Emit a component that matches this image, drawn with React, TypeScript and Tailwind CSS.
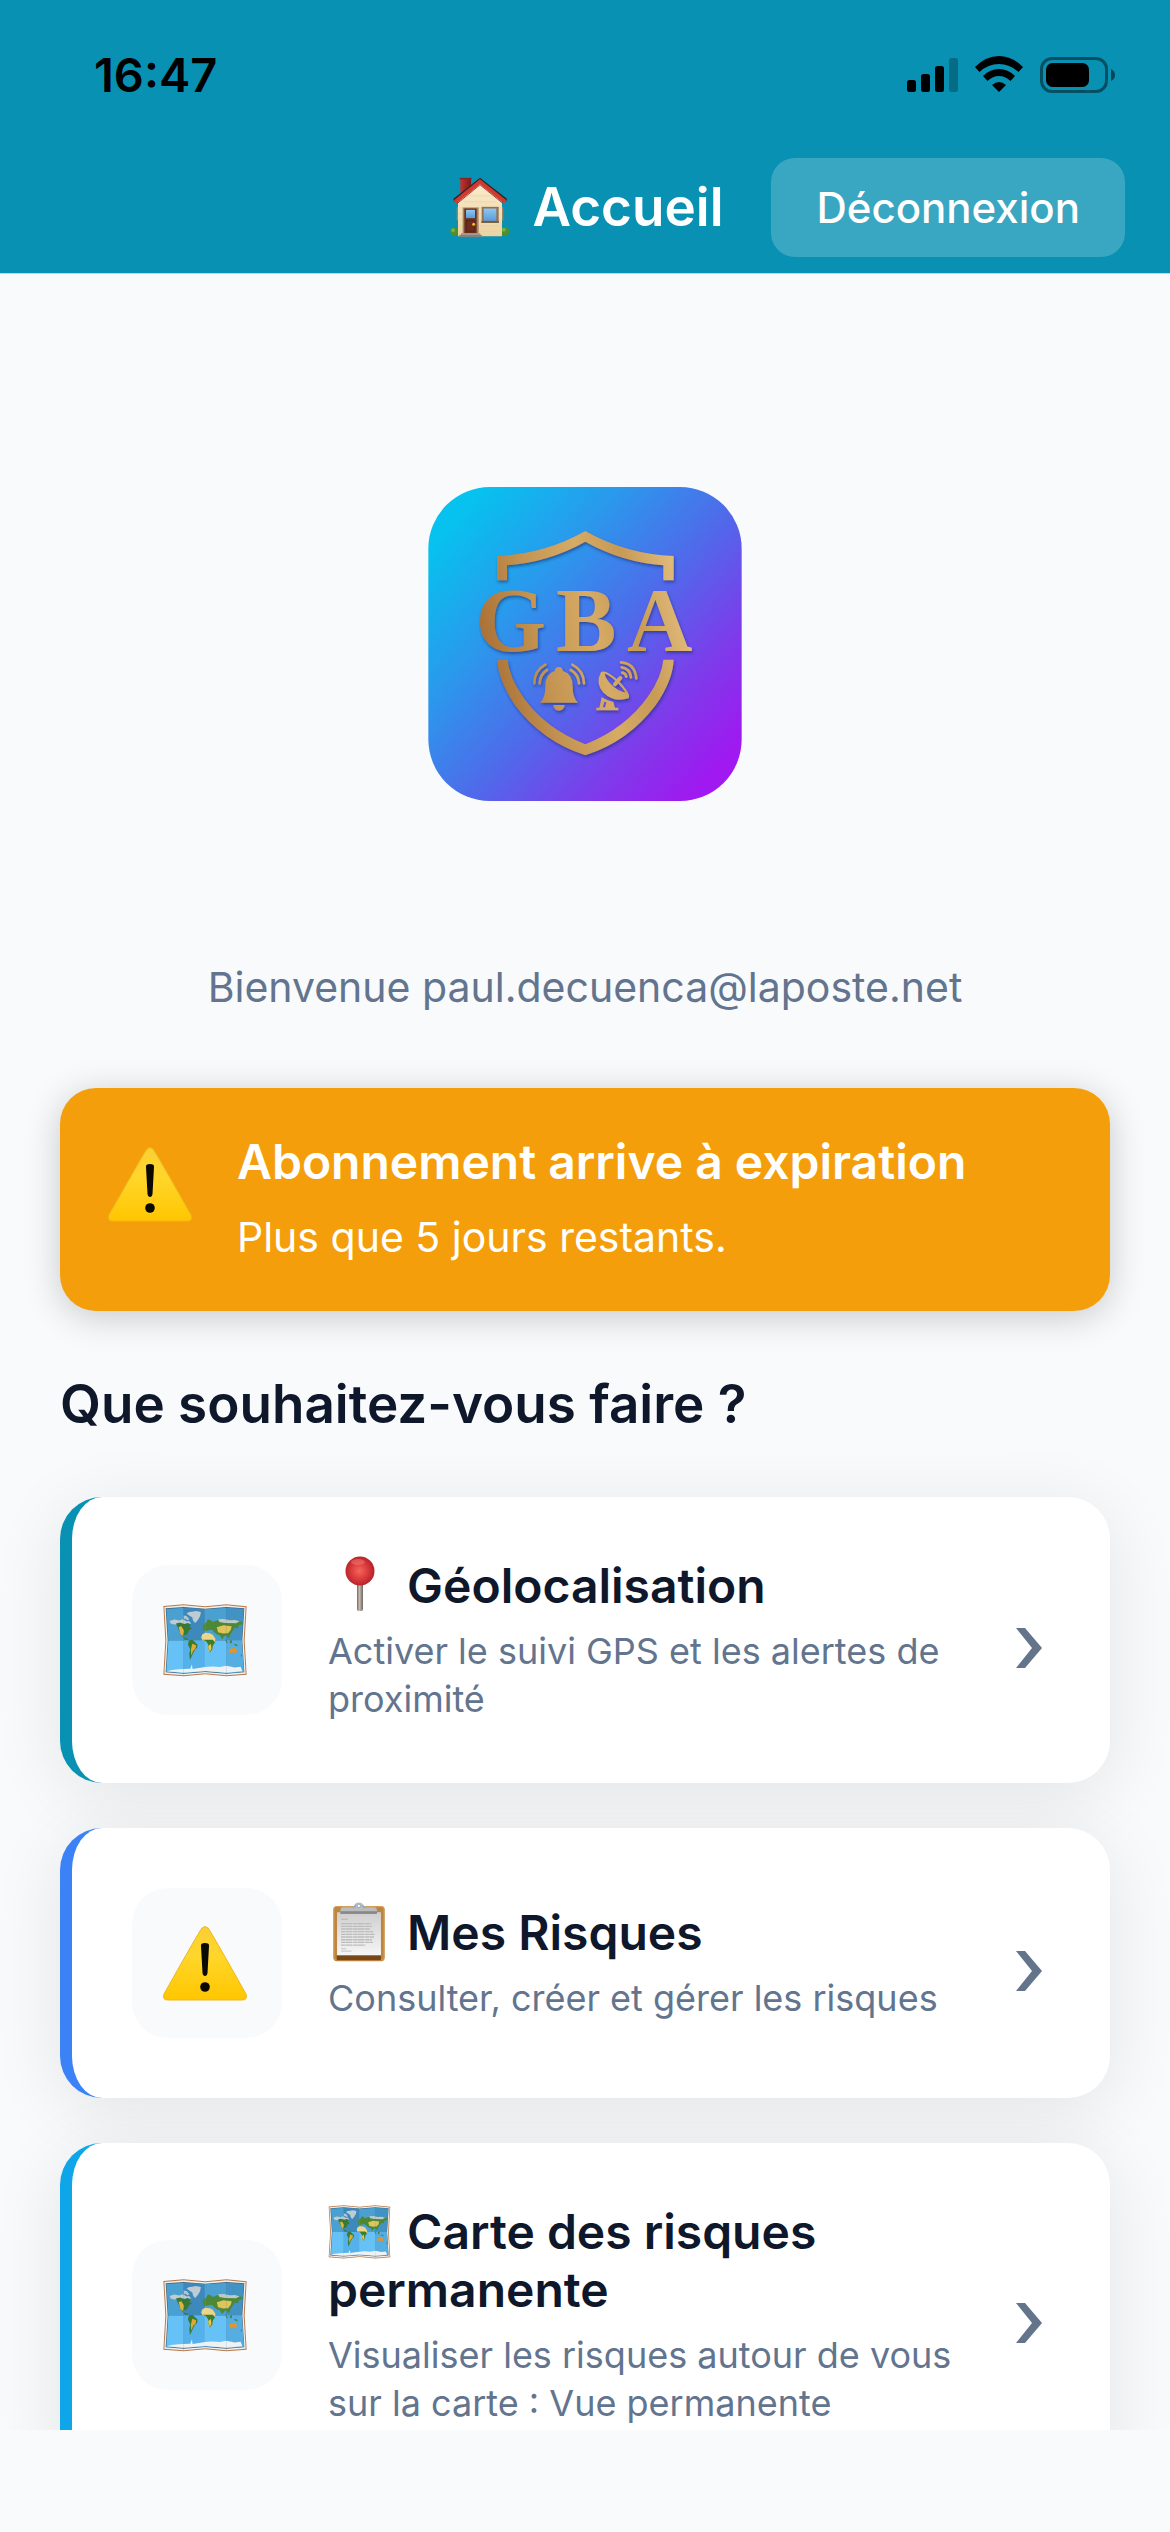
import React from "react";

type IconProps = { className?: string };

function HouseIcon({ className }: IconProps) {
  return (
    <svg viewBox="98 80 180 182" className={className} aria-hidden="true">
      <defs>
        <linearGradient id="house-wall" x1="0" y1="0" x2="0" y2="1">
          <stop offset="0" stopColor="#fbeccb" />
          <stop offset="1" stopColor="#ecd3a4" />
        </linearGradient>
        <linearGradient id="house-brick" x1="0" y1="0" x2="1" y2="0">
          <stop offset="0" stopColor="#c5342c" />
          <stop offset="1" stopColor="#7d1a1a" />
        </linearGradient>
        <linearGradient id="house-glass" x1="0" y1="0" x2="0" y2="1">
          <stop offset="0" stopColor="#8fc7ef" />
          <stop offset="1" stopColor="#5b9bd8" />
        </linearGradient>
      </defs>
      <rect x="129" y="83" width="32" height="50" fill="url(#house-brick)" />
      <rect x="127" y="82" width="36" height="5" fill="#8a2420" />
      <circle cx="111" cy="243" r="12" fill="#4f8f2c" />
      <circle cx="107" cy="239" r="6" fill="#74b043" />
      <circle cx="263" cy="243" r="13" fill="#4f8f2c" />
      <circle cx="259" cy="238" r="6" fill="#74b043" />
      <path d="M118 170h6v40h-6zM252 170h6v40h-6z" fill="#9a8467" />
      <path d="M188 94 254 154V257H122V154Z" fill="url(#house-wall)" />
      <path d="M124 172H252M124 190H252M124 208H252M124 226H252M124 242H252M140 154H236M158 136H218" stroke="#e2cca0" strokeWidth="1.5" />
      <path d="M108 145 188 82 269 145 267 153 188 92 110 153Z" fill="#33272a" />
      <path d="M110 149 188 86 267 149 260 159 188 101 117 159Z" fill="#d33a2f" />
      <path d="M121 158 188 103 256 158" fill="none" stroke="#8f1f1c" strokeWidth="2.5" />
      <rect x="136" y="171" width="48" height="80" fill="#a48664" />
      <rect x="141" y="174" width="37" height="75" fill="#6e2d1c" />
      <rect x="146" y="178" width="27" height="25" fill="url(#house-glass)" />
      <rect x="147" y="210" width="25" height="32" fill="none" stroke="#54200f" strokeWidth="2" />
      <circle cx="169" cy="221" r="4.5" fill="#f2bb35" />
      <rect x="193" y="169" width="51" height="47" fill="#8f7355" />
      <rect x="199" y="174" width="38" height="37" fill="url(#house-glass)" />
      <rect x="192" y="212" width="53" height="5" fill="#6f573e" />
      <rect x="131" y="248" width="58" height="6" fill="#a5a09a" />
      <rect x="126" y="253" width="67" height="7" fill="#85817c" />
    </svg>
  );
}

function MapIcon({ className }: IconProps) {
  return (
    <svg viewBox="99 130 253 220" className={className} aria-hidden="true">
      <path d="M100 136 161 131 226 137 290 131 351 137 345 240 351 343 290 348 226 342 161 348 100 343 106 240Z" fill="#b87a4b" />
      <path d="M103 139 161 134 226 140 290 134 348 140 342 240 348 340 290 345 226 339 161 345 103 340 109 240Z" fill="#f3efe9" />
      <path d="M107 143 161 139 226 144 290 139 344 143 338 240 344 336 290 340 226 335 161 340 107 336 113 240Z" fill="#3d6583" />
      <path d="M109 145 161 141 226 146 290 141 342 145 336 240H115Z" fill="#4ba0d2" />
      <path d="M115 240H336L342 334 290 338 226 333 161 338 109 334Z" fill="#66c2f6" />
      <path d="M161 141 226 146V240H161Z" fill="#397fb2" opacity="0.7" />
      <path d="M290 141 342 145 336 240H290Z" fill="#3c86b8" opacity="0.55" />
      <path d="M161 240H226V333L161 338Z" fill="#55b1e9" />
      <path d="M290 240H336L342 334 290 338Z" fill="#55ade2" />
      <path d="M119 181 133 177 148 180 159 176 171 183 178 181 184 190 174 188 164 193 148 190 132 192 122 189Z" fill="#c1ccd1" />
      <path d="M138 189 150 186 163 190 173 187 183 193 178 199 187 203 178 208 173 220 165 225 159 221 160 230 171 234 177 240 166 237 155 226 149 213 144 202Z" fill="#387936" />
      <path d="M146 199 154 197 162 209 161 219 157 227 151 218Z" fill="#dfb441" />
      <path d="M170 159 178 154 187 153 198 151 213 154 211 166 204 178 196 187 190 181 187 170 180 166Z" fill="#bfcbd2" />
      <path d="M161 165 170 166 178 175 174 180 165 174 162 178Z" fill="#b1c7d4" />
      <path d="M177 240 188 238 196 246 203 252 202 262 195 268 190 278 184 291 180 299 178 281 181 267 174 252Z" fill="#397b33" />
      <path d="M187 250 199 254 197 264 190 271 184 286 183 268Z" fill="#e5a832" />
      <path d="M219 193 231 184 234 176 243 179 249 184 265 178 286 181 303 178 320 180 340 184 339 191 327 194 324 204 315 201 309 211 303 220 300 230 293 232 289 223 283 229 277 236 271 225 262 222 253 215 247 208 236 209 225 212 219 205Z" fill="#4c8836" />
      <path d="M261 200 281 194 306 197 303 208 295 218 280 219 265 215Z" fill="#dfc45b" />
      <path d="M265 176 282 175 300 179 316 178 330 182 319 188 286 187 269 184Z" fill="#bdcac8" />
      <path d="M217 222 226 217 240 218 249 223 257 235 255 245 249 255 246 270 239 277 234 266 235 252 229 242 218 239 214 231Z" fill="#ead589" />
      <path d="M219 238 249 238 256 245 249 256 248 266 240 277 236 266 235 252 229 243Z" fill="#3b7e31" />
      <path d="M235 257 243 250 245 265 240 275Z" fill="#edc553" />
      <path d="M298 270 304 263 312 264 317 260 322 271 319 279 311 275 300 279Z" fill="#e99325" />
      <path d="M286 236 291 241 295 250 290 246ZM301 240 307 239 306 249 300 247ZM312 250 322 252 324 257 317 256ZM333 281 338 286 335 290Z" fill="#43853d" />
      <path d="M111 333 125 329 145 327 160 326 181 325 186 312 188 326 207 323 226 320 248 318 270 320 290 316 315 321 333 319 338 333 290 337 226 332 161 337Z" fill="#eef2f4" />
      <path d="M161 135V345M290 135V345" stroke="#315671" strokeWidth="1" opacity="0.4" />
      <path d="M226 139V341" stroke="#fff" strokeWidth="1" opacity="0.25" />
    </svg>
  );
}

function WarningIcon({ className }: IconProps) {
  return (
    <svg viewBox="0 0 84 75" className={className} aria-hidden="true">
      <defs>
        <linearGradient id="warning-fill" x1="0" y1="0" x2="0" y2="1">
          <stop offset="0" stopColor="#f9cf35" />
          <stop offset="0.4" stopColor="#ffd62b" />
          <stop offset="1" stopColor="#ffc600" />
        </linearGradient>
      </defs>
      <path d="M39 2Q42 -1 45 2Q47 4 83 68Q85 74 79 74H5Q-1 74 1 68Q37 4 39 2Z" fill="url(#warning-fill)" stroke="#efb71b" strokeWidth="1" />
      <path d="M38 20Q37.500 17 42 17Q46.500 17 46 20L44.500 47Q44 50 42 50Q40 50 39.500 47Z" fill="#0b0904" />
      <circle cx="42" cy="61" r="4.800" fill="#0b0904" />
    </svg>
  );
}

function PinIcon({ className }: IconProps) {
  return (
    <svg viewBox="0 0 63 56" className={className} aria-hidden="true">
      <defs>
        <radialGradient id="pin-ball" cx="0.48" cy="0.5" r="0.55">
          <stop offset="0" stopColor="#f2685c" />
          <stop offset="0.45" stopColor="#e04040" />
          <stop offset="1" stopColor="#b01d25" />
        </radialGradient>
        <linearGradient id="pin-needle" x1="0" y1="0" x2="1" y2="0">
          <stop offset="0" stopColor="#6f6560" />
          <stop offset="0.4" stopColor="#c9bcb3" />
          <stop offset="1" stopColor="#6f6560" />
        </linearGradient>
      </defs>
      <rect x="29" y="27" width="6" height="28" rx="2" fill="url(#pin-needle)" />
      <circle cx="32" cy="15" r="14.500" fill="url(#pin-ball)" />
      <ellipse cx="30" cy="6" rx="7" ry="3" fill="#ff9d90" opacity="0.35" />
    </svg>
  );
}

function ClipboardIcon({ className }: IconProps) {
  return (
    <svg viewBox="88 130 188 178" className={className} aria-hidden="true">
      <defs>
        <linearGradient id="clipboard-paper" x1="0" y1="0" x2="0" y2="1">
          <stop offset="0" stopColor="#cfcfcf" />
          <stop offset="1" stopColor="#f6f6f6" />
        </linearGradient>
      </defs>
      <rect x="104" y="142" width="153" height="164" rx="10" fill="#bc8640" />
      <rect x="106" y="144" width="149" height="158" rx="8" fill="none" stroke="#d29a50" strokeWidth="3" />
      <rect x="115" y="160" width="131" height="129" fill="url(#clipboard-paper)" />
      <rect x="114" y="289" width="132" height="14" fill="#784719" />
      <g stroke="#bcbcbc" strokeWidth="4">
        <path d="M127 181H147" />
        <path d="M127 194H217M127 202H219M127 210H214M127 218H223M127 226H227M127 234H225M127 242H219M127 250H222M127 258H200" strokeDasharray="13 1 20 2" />
        <path d="M127 269H143M127 276H158" strokeWidth="2.500" />
      </g>
      <path d="M125 165V152Q126 145 134 145H160Q166 144 167 138Q171 131 180 131Q190 131 193 138Q195 144 201 145H225Q233 145 234 152V165Z" fill="#b8bdc1" />
      <path d="M162 147Q168 145 170 139M191 139Q193 145 199 147" stroke="#80a9d7" strokeWidth="4" fill="none" />
      <circle cx="180" cy="141" r="5" fill="#fff" stroke="#8b949b" strokeWidth="2" />
      <rect x="125" y="157" width="109" height="8" fill="#8d8781" />
    </svg>
  );
}

function ChevronIcon({ className }: IconProps) {
  return (
    <svg viewBox="0 0 26 40" className={className} aria-hidden="true">
      <path d="M0 0H9L26 20 9 40H0L16 20Z" fill="#64748b" />
    </svg>
  );
}

function Logo({ className }: IconProps) {
  return (
    <svg viewBox="30 51 940 942" className={className} role="img" aria-label="GBA">
      <defs>
        <linearGradient id="logo-bg" gradientUnits="userSpaceOnUse" x1="90" y1="180" x2="890" y2="900">
          <stop offset="0" stopColor="#07c1ee" />
          <stop offset="0.28" stopColor="#2b98ec" />
          <stop offset="0.55" stopColor="#5069ea" />
          <stop offset="0.78" stopColor="#7c3dea" />
          <stop offset="1" stopColor="#9f19f0" />
        </linearGradient>
        <linearGradient id="logo-gold" gradientUnits="userSpaceOnUse" x1="190" y1="540" x2="800" y2="400">
          <stop offset="0" stopColor="#a96f35" />
          <stop offset="0.3" stopColor="#c59653" />
          <stop offset="0.55" stopColor="#d6ab65" />
          <stop offset="0.75" stopColor="#c79a55" />
          <stop offset="1" stopColor="#e2bc7c" />
        </linearGradient>
        <filter id="logo-shadow" x="-10%" y="-10%" width="120%" height="120%">
          <feDropShadow dx="3" dy="6" stdDeviation="5" floodColor="#1e2a6b" floodOpacity="0.6" />
        </filter>
      </defs>
      <rect x="30" y="51" width="940" height="942" rx="185" fill="url(#logo-bg)" />
      <g filter="url(#logo-shadow)" fill="url(#logo-gold)">
        <path d="M236 331V258Q380 252 501 183Q622 252 766 258V331H735V286Q610 276 501 215Q392 276 266 286V331Z" />
        <path d="M236 569H268Q272 620 315 682Q380 775 501 823Q622 775 690 678Q730 620 735 569H766Q764 630 712 706Q630 815 501 856Q372 815 290 706Q240 630 236 569Z" />
        <g className="font-['Liberation_Serif',serif] font-bold" fontSize="272" textAnchor="middle">
          <text x="277" y="544">G</text>
          <text x="504" y="544">B</text>
          <text x="724" y="544">A</text>
        </g>
        <path d="M365 698Q381 684 381 650Q380 612 409 603Q410 591 421 591Q432 591 434 603Q464 612 463 650Q463 684 479 698Z" />
        <path d="M405 705H439Q437 722 422 722Q407 722 405 705Z" />
        <g fill="none" stroke="url(#logo-gold)" strokeWidth="8" strokeLinecap="round">
          <path d="M381 584Q348 602 348 640M386 600Q366 612 364 640" />
          <path d="M462 584Q496 602 497 640M457 600Q480 612 482 640" />
          <path d="M608 577Q650 580 654 625M610 592Q635 596 638 622M612 608Q622 610 624 620" />
          <path d="M606 624 590 643" strokeWidth="12" />
        </g>
        <path d="M548 606Q530 640 555 668Q590 700 632 684Q632 674 628 668Q600 668 575 640Q556 618 560 606Z" />
        <path d="M551 608Q566 604 600 636Q632 670 629 682" fill="none" stroke="url(#logo-gold)" strokeWidth="6" />
        <path d="M550 682Q566 692 585 696L590 713H600V721H534V713H543Z" />
        <path d="M561 696 557 712" stroke="#654fd8" strokeWidth="6" />
      </g>
    </svg>
  );
}

function StatusIcons() {
  return (
    <svg viewBox="0 0 208 38" className="h-[38px] w-[208px]" role="img" aria-label="Réseau, Wi-Fi, batterie">
      <rect x="0" y="24" width="9" height="12" rx="2.500" />
      <rect x="14" y="18" width="9" height="18" rx="2.500" />
      <rect x="28" y="10" width="9" height="26" rx="2.500" />
      <rect x="42" y="2" width="9" height="34" rx="2.500" opacity="0.25" />
      <path d="M68 11Q79 0 92 0Q105 0 116 11L111.500 16Q103 8 92 8Q81 8 72.500 16Z" />
      <path d="M76 20Q83 13 92 13Q101 13 108 20L103.500 25Q98 20 92 20Q86 20 80.500 25Z" />
      <path d="M85 29Q92 23 99 29L92 36Z" />
      <rect x="134.500" y="2.500" width="65" height="33" rx="10.500" fill="none" stroke="#000" strokeWidth="3" opacity="0.45" />
      <rect x="139" y="7" width="43" height="24" rx="6.500" />
      <path d="M204 13Q208 15 208 19Q208 23 204 25Z" opacity="0.5" />
    </svg>
  );
}

type MenuItem = {
  border: string;
  tile: React.ReactNode;
  inline: React.ReactNode;
  title: string;
  description: string;
};

const items: MenuItem[] = [
  {
    border: "border-[#0891b2]",
    tile: <MapIcon className="h-[73px] w-[84px]" />,
    inline: <PinIcon className="-mt-3 mr-1 inline-block h-[56px] w-[63px]" />,
    title: "Géolocalisation",
    description: "Activer le suivi GPS et les alertes de proximité",
  },
  {
    border: "border-[#3b82f6]",
    tile: <WarningIcon className="h-[75px] w-[84px]" />,
    inline: <ClipboardIcon className="-mt-2 mr-1 inline-block h-[60px] w-[63px]" />,
    title: "Mes Risques",
    description: "Consulter, créer et gérer les risques",
  },
  {
    border: "border-[#0ea5e9]",
    tile: <MapIcon className="h-[73px] w-[84px]" />,
    inline: <MapIcon className="-mt-2 mr-1 inline-block h-[54px] w-[63px]" />,
    title: "Carte des risques permanente",
    description: "Visualiser les risques autour de vous sur la carte : Vue permanente",
  },
];

function MenuCard({ item }: { item: MenuItem }) {
  return (
    <button
      type="button"
      className={`flex w-full items-center rounded-[42px] border-l-[12px] bg-white p-[60px] text-left shadow-[0_12px_72px_rgba(0,0,0,0.09)] ${item.border}`}
    >
      <span className="flex size-[150px] shrink-0 items-center justify-center rounded-[36px] bg-slate-50 pr-1">{item.tile}</span>
      <span className="ml-[46px] flex min-w-0 flex-1 flex-col gap-3">
        <span className="text-[48px] leading-[58px] font-semibold text-slate-900">
          {item.inline} {item.title}
        </span>
        <span className="text-[36px] leading-[48px] text-slate-500">{item.description}</span>
      </span>
      <span className="flex w-[57px] shrink-0 justify-end pt-4 pr-2">
        <ChevronIcon className="h-10 w-[26px]" />
      </span>
    </button>
  );
}

export default function App() {
  return (
    <div className="flex h-screen flex-col bg-slate-50 font-['Inter',sans-serif] text-slate-900">
      <header className="shrink-0 border-b border-slate-300 bg-[#0891b2]">
        <div className="flex h-[141px] items-center justify-between pt-2 pr-[55px] pl-[94px]">
          <time className="text-[47px] leading-none font-semibold text-black">16:47</time>
          <StatusIcons />
        </div>
        <div className="grid h-[132px] grid-cols-[1fr_auto_1fr] items-center">
          <h1 className="col-start-2 flex items-center gap-[22px] pl-1 text-[53px] leading-[66px] font-semibold text-white">
            <HouseIcon className="h-[61px] w-[60px]" />
            Accueil
          </h1>
          <button
            type="button"
            className="mr-[45px] justify-self-end rounded-3xl bg-white/20 px-[45px] py-6 text-[42px] leading-[51px] font-medium text-white"
          >
            Déconnexion
          </button>
        </div>
      </header>

      <main className="min-h-0 flex-1 overflow-x-hidden overflow-y-auto px-[60px] [scrollbar-width:none]">
        <Logo className="mx-auto mt-[213px] h-[314px] w-[314px]" />
        <p className="mt-[161px] text-center text-[41px] leading-[51px] text-slate-500">Bienvenue paul.decuenca@laposte.net</p>

        <section className="mt-[75px] flex items-start rounded-[36px] bg-[#f59e0b] px-12 pt-[45px] pb-12 text-white shadow-[0_6px_36px_rgba(0,0,0,0.2)]">
          <WarningIcon className="mt-3.5 h-[75px] w-[84px] shrink-0" />
          <div className="ml-[45px]">
            <h2 className="text-[48px] leading-[58px] font-semibold">Abonnement arrive à expiration</h2>
            <p className="mt-[21px] text-[41px] leading-[51px]">Plus que 5 jours restants.</p>
          </div>
        </section>

        <h2 className="mt-[60px] mb-[60px] text-[53px] leading-[66px] font-semibold">Que souhaitez-vous faire ?</h2>

        <div className="flex flex-col gap-[45px] pb-[60px]">
          {items.map((item) => (
            <MenuCard key={item.title} item={item} />
          ))}
        </div>
      </main>

      <footer className="h-[102px] shrink-0" />
    </div>
  );
}
